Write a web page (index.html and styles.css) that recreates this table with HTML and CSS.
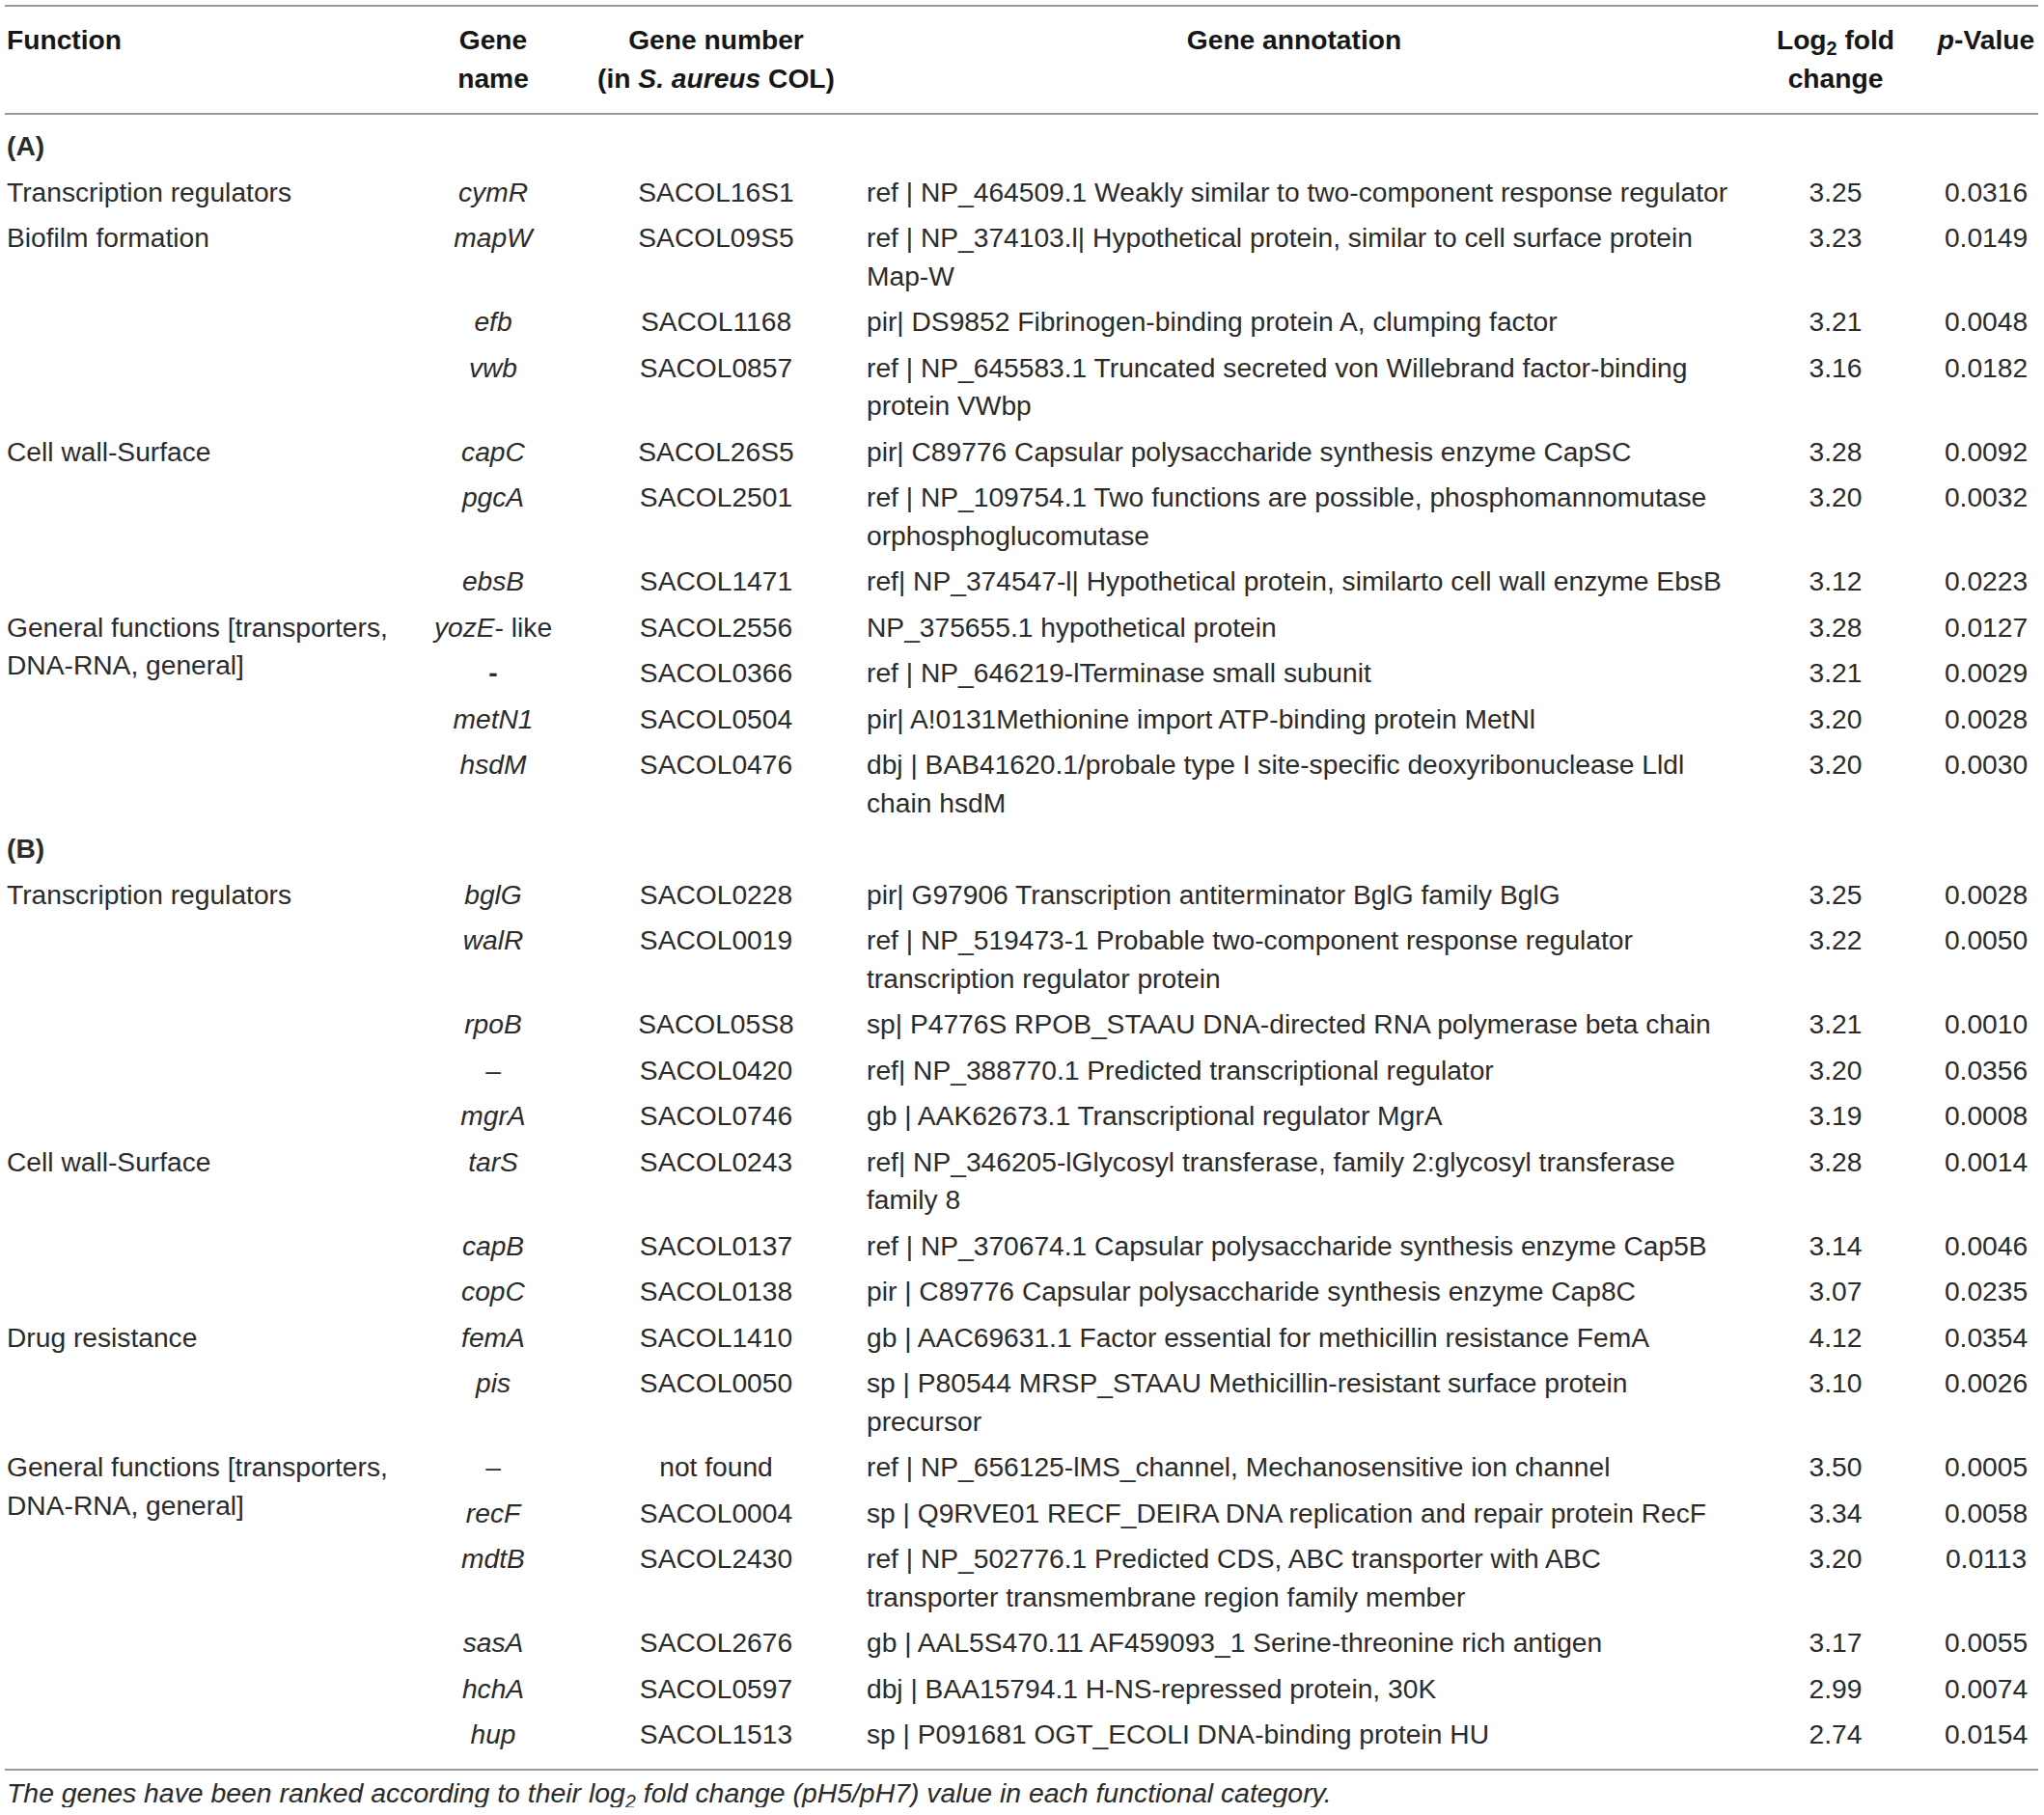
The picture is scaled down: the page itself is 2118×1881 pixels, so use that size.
FILE: index.html
```html
<!DOCTYPE html>
<html lang="en">
<head>
    <meta charset="UTF-8">
    <title>Genes ranked by log2 fold change</title>
    <link rel="stylesheet" href="styles.css">
</head>
<body>
    <table class="genes">
        <colgroup>
            <col class="c-func">
            <col class="c-name">
            <col class="c-num">
            <col class="c-anno">
            <col class="c-log">
            <col class="c-pval">
        </colgroup>
        <thead>
            <tr>
                <th class="func">Function</th>
                <th>Gene<br>name</th>
                <th>Gene number<br>(in <i>S. aureus</i> COL)</th>
                <th>Gene annotation</th>
                <th>Log<sub>2</sub> fold<br>change</th>
                <th><i>p</i>-Value</th>
            </tr>
        </thead>
        <tbody>
            <tr class="section first"><td class="func" colspan="6">(A)</td></tr>
            <tr>
                <td class="func">Transcription regulators</td>
                <td class="name"><i>cymR</i></td><td class="num">SACOL16S1</td>
                <td class="anno">ref | NP_464509.1 Weakly similar to two-component response regulator</td>
                <td class="val">3.25</td><td class="val">0.0316</td>
            </tr>
            <tr>
                <td class="func" rowspan="3">Biofilm formation</td>
                <td class="name"><i>mapW</i></td><td class="num">SACOL09S5</td>
                <td class="anno">ref | NP_374103.l| Hypothetical protein, similar to cell surface protein<br>Map-W</td>
                <td class="val">3.23</td><td class="val">0.0149</td>
            </tr>
            <tr>
                <td class="name"><i>efb</i></td><td class="num">SACOL1168</td>
                <td class="anno">pir| DS9852 Fibrinogen-binding protein A, clumping factor</td>
                <td class="val">3.21</td><td class="val">0.0048</td>
            </tr>
            <tr>
                <td class="name"><i>vwb</i></td><td class="num">SACOL0857</td>
                <td class="anno">ref | NP_645583.1 Truncated secreted von Willebrand factor-binding<br>protein VWbp</td>
                <td class="val">3.16</td><td class="val">0.0182</td>
            </tr>
            <tr>
                <td class="func" rowspan="3">Cell wall-Surface</td>
                <td class="name"><i>capC</i></td><td class="num">SACOL26S5</td>
                <td class="anno">pir| C89776 Capsular polysaccharide synthesis enzyme CapSC</td>
                <td class="val">3.28</td><td class="val">0.0092</td>
            </tr>
            <tr>
                <td class="name"><i>pgcA</i></td><td class="num">SACOL2501</td>
                <td class="anno">ref | NP_109754.1 Two functions are possible, phosphomannomutase<br>orphosphoglucomutase</td>
                <td class="val">3.20</td><td class="val">0.0032</td>
            </tr>
            <tr>
                <td class="name"><i>ebsB</i></td><td class="num">SACOL1471</td>
                <td class="anno">ref| NP_374547-l| Hypothetical protein, similarto cell wall enzyme EbsB</td>
                <td class="val">3.12</td><td class="val">0.0223</td>
            </tr>
            <tr>
                <td class="func" rowspan="4">General functions [transporters,<br>DNA-RNA, general]</td>
                <td class="name"><i>yozE</i>- like</td><td class="num">SACOL2556</td>
                <td class="anno">NP_375655.1 hypothetical protein</td>
                <td class="val">3.28</td><td class="val">0.0127</td>
            </tr>
            <tr>
                <td class="name"><b>-</b></td><td class="num">SACOL0366</td>
                <td class="anno">ref | NP_646219-lTerminase small subunit</td>
                <td class="val">3.21</td><td class="val">0.0029</td>
            </tr>
            <tr>
                <td class="name"><i>metN1</i></td><td class="num">SACOL0504</td>
                <td class="anno">pir| A!0131Methionine import ATP-binding protein MetNl</td>
                <td class="val">3.20</td><td class="val">0.0028</td>
            </tr>
            <tr>
                <td class="name"><i>hsdM</i></td><td class="num">SACOL0476</td>
                <td class="anno">dbj | BAB41620.1/probale type I site-specific deoxyribonuclease Lldl<br>chain hsdM</td>
                <td class="val">3.20</td><td class="val">0.0030</td>
            </tr>

            <tr class="section"><td class="func" colspan="6">(B)</td></tr>
            <tr>
                <td class="func" rowspan="5">Transcription regulators</td>
                <td class="name"><i>bglG</i></td><td class="num">SACOL0228</td>
                <td class="anno">pir| G97906 Transcription antiterminator BglG family BglG</td>
                <td class="val">3.25</td><td class="val">0.0028</td>
            </tr>
            <tr>
                <td class="name"><i>walR</i></td><td class="num">SACOL0019</td>
                <td class="anno">ref | NP_519473-1 Probable two-component response regulator<br>transcription regulator protein</td>
                <td class="val">3.22</td><td class="val">0.0050</td>
            </tr>
            <tr>
                <td class="name"><i>rpoB</i></td><td class="num">SACOL05S8</td>
                <td class="anno">sp| P4776S RPOB_STAAU DNA-directed RNA polymerase beta chain</td>
                <td class="val">3.21</td><td class="val">0.0010</td>
            </tr>
            <tr>
                <td class="name">–</td><td class="num">SACOL0420</td>
                <td class="anno">ref| NP_388770.1 Predicted transcriptional regulator</td>
                <td class="val">3.20</td><td class="val">0.0356</td>
            </tr>
            <tr>
                <td class="name"><i>mgrA</i></td><td class="num">SACOL0746</td>
                <td class="anno">gb | AAK62673.1 Transcriptional regulator MgrA</td>
                <td class="val">3.19</td><td class="val">0.0008</td>
            </tr>
            <tr>
                <td class="func" rowspan="3">Cell wall-Surface</td>
                <td class="name"><i>tarS</i></td><td class="num">SACOL0243</td>
                <td class="anno">ref| NP_346205-lGlycosyl transferase, family 2:glycosyl transferase<br>family 8</td>
                <td class="val">3.28</td><td class="val">0.0014</td>
            </tr>
            <tr>
                <td class="name"><i>capB</i></td><td class="num">SACOL0137</td>
                <td class="anno">ref | NP_370674.1 Capsular polysaccharide synthesis enzyme Cap5B</td>
                <td class="val">3.14</td><td class="val">0.0046</td>
            </tr>
            <tr>
                <td class="name"><i>copC</i></td><td class="num">SACOL0138</td>
                <td class="anno">pir | C89776 Capsular polysaccharide synthesis enzyme Cap8C</td>
                <td class="val">3.07</td><td class="val">0.0235</td>
            </tr>
            <tr>
                <td class="func" rowspan="2">Drug resistance</td>
                <td class="name"><i>femA</i></td><td class="num">SACOL1410</td>
                <td class="anno">gb | AAC69631.1 Factor essential for methicillin resistance FemA</td>
                <td class="val">4.12</td><td class="val">0.0354</td>
            </tr>
            <tr>
                <td class="name"><i>pis</i></td><td class="num">SACOL0050</td>
                <td class="anno">sp | P80544 MRSP_STAAU Methicillin-resistant surface protein<br>precursor</td>
                <td class="val">3.10</td><td class="val">0.0026</td>
            </tr>
            <tr>
                <td class="func" rowspan="6">General functions [transporters,<br>DNA-RNA, general]</td>
                <td class="name">–</td><td class="num">not found</td>
                <td class="anno">ref | NP_656125-lMS_channel, Mechanosensitive ion channel</td>
                <td class="val">3.50</td><td class="val">0.0005</td>
            </tr>
            <tr>
                <td class="name"><i>recF</i></td><td class="num">SACOL0004</td>
                <td class="anno">sp | Q9RVE01 RECF_DEIRA DNA replication and repair protein RecF</td>
                <td class="val">3.34</td><td class="val">0.0058</td>
            </tr>
            <tr>
                <td class="name"><i>mdtB</i></td><td class="num">SACOL2430</td>
                <td class="anno">ref | NP_502776.1 Predicted CDS, ABC transporter with ABC<br>transporter transmembrane region family member</td>
                <td class="val">3.20</td><td class="val">0.0113</td>
            </tr>
            <tr>
                <td class="name"><i>sasA</i></td><td class="num">SACOL2676</td>
                <td class="anno">gb | AAL5S470.11 AF459093_1 Serine-threonine rich antigen</td>
                <td class="val">3.17</td><td class="val">0.0055</td>
            </tr>
            <tr>
                <td class="name"><i>hchA</i></td><td class="num">SACOL0597</td>
                <td class="anno">dbj | BAA15794.1 H-NS-repressed protein, 30K</td>
                <td class="val">2.99</td><td class="val">0.0074</td>
            </tr>
            <tr class="last">
                <td class="name"><i>hup</i></td><td class="num">SACOL1513</td>
                <td class="anno">sp | P091681 OGT_ECOLI DNA-binding protein HU</td>
                <td class="val">2.74</td><td class="val">0.0154</td>
            </tr>
        </tbody>
    </table>
    <p class="note">The genes have been ranked according to their log<sub>2</sub> fold change (pH5/pH7) value in each functional category.</p>
</body>
</html>
```

FILE: styles.css
```css
body {
    margin: 0;
    background: #fff;
    color: #2b2b2b;
    font-family: "Liberation Sans", Arial, sans-serif;
}
/* Tabelle: feste Spalten */
.genes {
    margin: 5px 0 0 5px;
    width: 2107px;
    table-layout: fixed;
    border-collapse: collapse;
    font-size: 28.2px;
}
.c-func { width: 415px; }
.c-name { width: 182px; }
.c-num  { width: 280px; }
.c-anno { width: 918px; }
.c-log  { width: 204px; }
.c-pval { width: 108px; }

/* Kopfzeile */
.genes th {
    font-weight: bold;
    color: #161616;
    line-height: 40px;
    padding: 14px 0 16px;
    text-align: center;
    vertical-align: top;
    border-top: 2px solid #9a9a9a;
    border-bottom: 2px solid #9a9a9a;
    white-space: nowrap;
}
.genes th.func {
    text-align: left;
    padding-left: 2px;
}
sub {
    font-size: 0.7em;
    line-height: 0;
    vertical-align: -0.3em;
}

/* Zellen */
.genes tbody {
    border-bottom: 2px solid #9a9a9a;
}
.genes td {
    line-height: 39.5px;
    padding: 4px 0;
    vertical-align: top;
    white-space: nowrap;
}
.genes td.func {
    padding-left: 2px;
}
.genes td.name,
.genes td.num,
.genes td.val {
    text-align: center;
}
.genes td.anno {
    padding-left: 16px;
}
.section td {
    font-weight: bold;
}
.section.first td {
    padding-top: 13px;
}
.last td {
    padding-bottom: 15px;
}

/* Fussnote */
.note {
    margin: 8px 0 0 7px;
    font-size: 28.4px;
    line-height: 30px;
    font-style: italic;
}
```
